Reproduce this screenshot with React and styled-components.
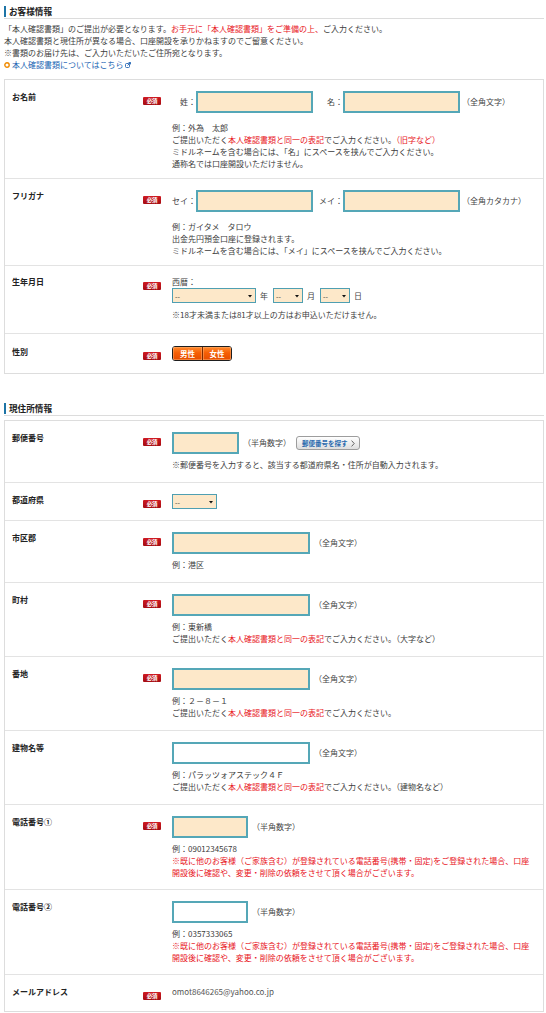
import React from "react"
import styled, { createGlobalStyle } from "styled-components"

const GlobalStyle = createGlobalStyle`
  body {
    margin: 0;
    background: #fff;
    font-family: "Noto Sans CJK JP", "Noto Sans", sans-serif;
    font-size: 8px;
    color: #3c3c3c;
  }
`

const Page = styled.div`
  width: 540px;
  padding: 6px 2px 2px 4px;
`

const SectionHead = styled.div`
  margin-top: ${(p) => p.$mt || 0}px;
  padding-bottom: 1px;
  border-bottom: 1px solid #dcdcdc;
`

const SectionTitle = styled.h2`
  margin: 0;
  padding-left: 3px;
  border-left: 2px solid #1d74a6;
  font-size: 8.6px;
  line-height: 11px;
  font-weight: bold;
  color: #222;
`

const Intro = styled.div`
  margin-top: 4px;
  line-height: 12px;
`

const Red = styled.span`
  color: #e8141c;
`

const InfoLink = styled.a`
  display: inline-flex;
  align-items: center;
  gap: 1px;
  color: #2164b3;
  text-decoration: none;
`

const Table = styled.div`
  margin-top: ${(p) => p.$mt || 0}px;
  border: 1px solid #dddddd;
`

const Row = styled.div`
  display: grid;
  grid-template-columns: 131px 29px 1fr;
  padding: ${(p) => p.$pt}px 7px ${(p) => p.$pb}px;

  & + & {
    border-top: 1px solid #e3e3e3;
  }
`

const Label = styled.div`
  font-weight: bold;
  line-height: 12px;
  color: #222;
`

const Badge = styled.span`
  display: block;
  width: 18px;
  height: 8px;
  margin-top: ${(p) => (p.$mt === undefined ? 6 : p.$mt)}px;
  border-radius: 1px;
  background: linear-gradient(#cf1a22, #a50c12);
  color: #fff;
  font-size: 5.5px;
  font-weight: bold;
  line-height: 8px;
  text-align: center;
  letter-spacing: -0.2px;
`

const Content = styled.div`
  min-width: 0;
  line-height: 12px;
`

const FieldRow = styled.div`
  display: flex;
  align-items: center;
`

const Prefix = styled.span`
  flex: none;
  width: 24px;
  text-align: right;
  color: #444;
`

const TextInput = styled.input`
  flex: none;
  box-sizing: border-box;
  width: ${(p) => p.$w}px;
  height: 22px;
  margin: 0 ${(p) => p.$mr || 0}px 0 0;
  padding: 0 3px;
  border: 2px solid #55a7b7;
  background: ${(p) => (p.$optional ? "#fff" : "#fde8c9")};
  outline: none;
  font: inherit;
`

const Unit = styled.span`
  flex: none;
  margin-left: ${(p) => (p.$ml === undefined ? 4 : p.$ml)}px;
  color: #444;
`

const Notes = styled.div`
  margin-top: ${(p) => p.$mt}px;
  line-height: 12px;
  color: ${(p) => (p.$red ? "#e8141c" : "inherit")};
`

const SelectBox = styled.span`
  flex: none;
  display: inline-flex;
  align-items: center;
  justify-content: space-between;
  box-sizing: border-box;
  width: ${(p) => p.$w}px;
  height: 15px;
  padding: 0 3px 0 2px;
  border: 1.5px solid #4f9fb2;
  background: #fde8c9;
  font-size: 7px;
  color: #333;
`

const DatePart = styled.span`
  margin: 0 5px 0 4px;
  color: #444;
`

const GenderGroup = styled.div`
  display: inline-flex;
  border: 1.5px solid #1e1e1e;
  border-radius: 3px;
  overflow: hidden;
`

const GenderButton = styled.button`
  width: 29px;
  height: 13px;
  margin: 0;
  padding: 0;
  border: 0;
  background: linear-gradient(#ff8a2e, #f65f05 45%, #e54d00);
  box-shadow: inset 0 0 0 0.5px #ffb070;
  color: #fff;
  font: inherit;
  font-size: 7.5px;
  font-weight: bold;
  line-height: 13px;

  & + & {
    border-left: 1px solid #7b2a00;
  }
`

const FindButton = styled.button`
  flex: none;
  display: inline-flex;
  align-items: center;
  gap: 3px;
  height: 14px;
  margin: 0 0 0 5px;
  padding: 0 4px 0 5px;
  border: 1px solid #9d9d9d;
  border-radius: 3px;
  background: linear-gradient(#ffffff, #dedede);
  color: #2a6aae;
  font: inherit;
  font-size: 6.5px;
  font-weight: bold;
`

const Email = styled.div`
  line-height: 12px;
  color: #555;
`

function Arrow() {
  return (
    <svg width="4" height="4" viewBox="0 0 4 4">
      <polygon points="0,1 4,1 2,3.6" fill="#111" />
    </svg>
  )
}

function Ring() {
  return (
    <svg width="6" height="6" viewBox="0 0 6 6" style={{ marginRight: 1 }}>
      <circle cx="3" cy="3" r="2.2" fill="none" stroke="#f08a00" strokeWidth="1.4" />
    </svg>
  )
}

function External() {
  return (
    <svg width="6" height="6" viewBox="0 0 6 6">
      <rect x="0.5" y="1.5" width="4" height="4" rx="1" fill="none" stroke="#2164b3" strokeWidth="0.9" />
      <path d="M2.5 3.5 L5.5 0.5 M3.6 0.5 H5.5 V2.4" fill="none" stroke="#2164b3" strokeWidth="0.9" />
    </svg>
  )
}

function Chevron() {
  return (
    <svg width="4" height="7" viewBox="0 0 4 7">
      <polyline points="0.6,0.6 3.2,3.5 0.6,6.4" fill="none" stroke="#555" strokeWidth="0.9" />
    </svg>
  )
}

const sameAsId = (
  <>
    ご提出いただく<Red>本人確認書類と同一の表記</Red>でご入力ください。
  </>
)

const phoneWarning = (
  <>
    ※既に他のお客様（ご家族含む）が登録されている電話番号(携帯・固定)をご登録された場合、口座
    <br />
    開設後に確認や、変更・削除の依頼をさせて頂く場合がございます。
  </>
)

function Field({ label, required = true, pt = 11, pb = 11, children }) {
  return (
    <Row $pt={pt} $pb={pb}>
      <Label>{label}</Label>
      <div>{required && <Badge>必須</Badge>}</div>
      <Content>{children}</Content>
    </Row>
  )
}

export default function App() {
  return (
    <Page>
      <GlobalStyle />

      <SectionHead>
        <SectionTitle>お客様情報</SectionTitle>
      </SectionHead>
      <Intro>
        「本人確認書類」のご提出が必要となります。
        <Red>お手元に「本人確認書類」をご準備の上、</Red>ご入力ください。
        <br />
        本人確認書類と現住所が異なる場合、口座開設を承りかねますのでご留意ください。
        <br />
        ※書類のお届け先は、ご入力いただいたご住所宛となります。
        <br />
        <InfoLink href="#">
          <Ring />
          本人確認書類についてはこちら
          <External />
        </InfoLink>
      </Intro>

      <Table $mt={8}>
        <Field label="お名前" pb={8}>
          <FieldRow>
            <Prefix>姓：</Prefix>
            <TextInput $w={117} $mr={6} />
            <Prefix>名：</Prefix>
            <TextInput $w={117} />
            <Unit $ml={2}>（全角文字）</Unit>
          </FieldRow>
          <Notes $mt={9}>
            例：外為　太郎
            <br />
            {sameAsId}
            <Red>（旧字など）</Red>
            <br />
            ミドルネームを含む場合には、「名」にスペースを挟んでご入力ください。
            <br />
            通称名では口座開設いただけません。
          </Notes>
        </Field>

        <Field label="フリガナ" pb={8}>
          <FieldRow>
            <Prefix>セイ：</Prefix>
            <TextInput $w={117} $mr={6} />
            <Prefix>メイ：</Prefix>
            <TextInput $w={117} />
            <Unit $ml={2}>（全角カタカナ）</Unit>
          </FieldRow>
          <Notes $mt={9}>
            例：ガイタメ　タロウ
            <br />
            出金先円預金口座に登録されます。
            <br />
            ミドルネームを含む場合には、「メイ」にスペースを挟んでご入力ください。
          </Notes>
        </Field>

        <Field label="生年月日" pt={10} pb={12}>
          <div>西暦：</div>
          <FieldRow>
            <SelectBox $w={84}>
              -- <Arrow />
            </SelectBox>
            <DatePart>年</DatePart>
            <SelectBox $w={30}>
              -- <Arrow />
            </SelectBox>
            <DatePart>月</DatePart>
            <SelectBox $w={30}>
              -- <Arrow />
            </SelectBox>
            <DatePart>日</DatePart>
          </FieldRow>
          <Notes $mt={6}>※18才未満または81才以上の方はお申込いただけません。</Notes>
        </Field>

        <Field label="性別" pt={12} pb={12}>
          <GenderGroup>
            <GenderButton>男性</GenderButton>
            <GenderButton>女性</GenderButton>
          </GenderGroup>
        </Field>
      </Table>

      <SectionHead $mt={29}>
        <SectionTitle>現住所情報</SectionTitle>
      </SectionHead>

      <Table $mt={4}>
        <Field label="郵便番号">
          <FieldRow>
            <TextInput $w={67} />
            <Unit>（半角数字）</Unit>
            <FindButton>
              郵便番号を探す
              <Chevron />
            </FindButton>
          </FieldRow>
          <Notes $mt={5}>※郵便番号を入力すると、該当する都道府県名・住所が自動入力されます。</Notes>
        </Field>

        <Field label="都道府県">
          <FieldRow>
            <SelectBox $w={45}>
              -- <Arrow />
            </SelectBox>
          </FieldRow>
        </Field>

        <Field label="市区郡">
          <FieldRow>
            <TextInput $w={138} />
            <Unit>（全角文字）</Unit>
          </FieldRow>
          <Notes $mt={5}>例：港区</Notes>
        </Field>

        <Field label="町村">
          <FieldRow>
            <TextInput $w={138} />
            <Unit>（全角文字）</Unit>
          </FieldRow>
          <Notes $mt={5}>
            例：東新橋
            <br />
            {sameAsId}（大字など）
          </Notes>
        </Field>

        <Field label="番地">
          <FieldRow>
            <TextInput $w={138} />
            <Unit>（全角文字）</Unit>
          </FieldRow>
          <Notes $mt={5}>
            例：２－８－１
            <br />
            {sameAsId}
          </Notes>
        </Field>

        <Field label="建物名等" required={false}>
          <FieldRow>
            <TextInput $w={138} $optional />
            <Unit>（全角文字）</Unit>
          </FieldRow>
          <Notes $mt={5}>
            例：パラッツォアステック４Ｆ
            <br />
            {sameAsId}（建物名など）
          </Notes>
        </Field>

        <Field label="電話番号①" pb={10}>
          <FieldRow>
            <TextInput $w={76} />
            <Unit>（半角数字）</Unit>
          </FieldRow>
          <Notes $mt={5}>例：09012345678</Notes>
          <Notes $mt={0} $red>
            {phoneWarning}
          </Notes>
        </Field>

        <Field label="電話番号②" required={false} pb={10}>
          <FieldRow>
            <TextInput $w={76} $optional />
            <Unit>（半角数字）</Unit>
          </FieldRow>
          <Notes $mt={5}>例：0357333065</Notes>
          <Notes $mt={0} $red>
            {phoneWarning}
          </Notes>
        </Field>

        <Field label="メールアドレス">
          <Email>omot8646265@yahoo.co.jp</Email>
        </Field>
      </Table>
    </Page>
  )
}
